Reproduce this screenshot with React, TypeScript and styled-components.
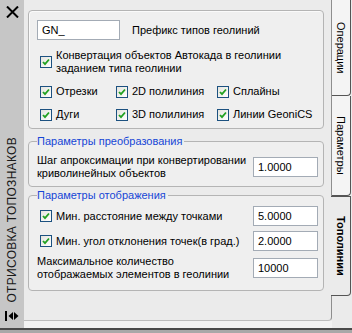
import styled, { createGlobalStyle } from "styled-components";

const GlobalStyle = createGlobalStyle`
  html, body {
    margin: 0;
    padding: 0;
    background: #ebebeb;
  }
  body {
    font-family: "Liberation Sans", Arial, sans-serif;
    font-size: 11px;
    color: #000;
  }
`;

// общий каркас палитры
const Frame = styled.div`
  width: 352px;
  height: 333px;
  display: flex;
  flex-direction: column;
  background: #ebebeb;
  overflow: hidden;
`;

const Main = styled.div`
  flex: 1;
  display: flex;
  min-height: 0;
`;

const BottomEdge = styled.div`
  height: 5px;
  box-sizing: border-box;
  border-top: 2px solid #4a4a4a;
  background: #a8a8a8;
`;

// левая полоса с заголовком
const Strip = styled.div`
  width: 24px;
  flex: none;
  background: #c6c6c6;
  display: flex;
  flex-direction: column;
  align-items: center;
  padding: 6px 0 6px;
  box-sizing: border-box;
`;

const StripTitle = styled.div`
  margin-top: auto;
  writing-mode: vertical-rl;
  transform: rotate(180deg);
  font-size: 12px;
  letter-spacing: 0.3px;
  color: #1a1a1a;
  white-space: nowrap;
`;

const DockIcon = styled.div`
  margin-top: 7px;
  height: 12px;
  display: flex;
  align-items: center;
`;

// центральная область
const PaneColumn = styled.div`
  flex: 1;
  display: flex;
  flex-direction: column;
  min-width: 0;
`;

const Pane = styled.div`
  flex: 1;
  display: flex;
  flex-direction: column;
  padding: 10px 7px 0 4px;
  border-right: 1px solid #8e8e8e;
  border-bottom: 1px solid #bdbdbd;
  border-bottom-right-radius: 4px;
`;

const PaneBand = styled.div`
  height: 7px;
  background: #f3f3f3;
`;

const Box = styled.div`
  border: 1px solid #b4b4b4;
  border-radius: 4px;
  background: #efefef;
  box-shadow: inset 1px 1px 0 #fafafa;
  padding: 9px 8px 6px 8px;
`;

const Group = styled.fieldset<{ $top: number; $bottom: number }>`
  margin: ${(p) => p.$top}px 0 0 0;
  border: 1px solid #b4b4b4;
  border-radius: 4px;
  background: #efefef;
  padding: 2px 5px ${(p) => p.$bottom}px 8px;
  min-width: 0;
`;

const GroupTitle = styled.legend`
  color: #1646d6;
  padding: 0 2px 0 0;
  line-height: 13px;
  font-size: 11px;
`;

const Row = styled.div<{ $top?: number }>`
  display: flex;
  align-items: center;
  margin-top: ${(p) => p.$top ?? 0}px;
`;

const Label = styled.span`
  flex: 1;
  line-height: 13px;
  white-space: nowrap;
`;

const Caption = styled.span`
  margin-left: 12px;
  white-space: nowrap;
`;

const CheckGrid = styled.div`
  display: grid;
  grid-template-columns: 76px 101px auto;
  grid-auto-rows: 15px;
  row-gap: 8px;
  margin-top: 9px;
`;

const CheckItem = styled.label`
  display: flex;
  align-items: center;
  white-space: nowrap;
  line-height: 13px;
`;

const CheckBox = styled.span`
  width: 12px;
  height: 12px;
  box-sizing: border-box;
  flex: none;
  margin: 0 4px 0 3px;
  border: 1px solid #1c5180;
  background: linear-gradient(135deg, #e4e4de, #ffffff);
  display: flex;
  align-items: center;
  justify-content: center;
`;

const Field = styled.input<{ $w: number }>`
  width: ${(p) => p.$w}px;
  height: 20px;
  box-sizing: border-box;
  flex: none;
  border: 1px solid #a3abb5;
  background: #fff;
  padding: 0 4px;
  font-family: inherit;
  font-size: 11px;
  color: #000;
  outline: none;
`;

// вкладки справа
const Tabs = styled.div`
  width: 20px;
  flex: none;
  display: flex;
  flex-direction: column;
`;

const Tab = styled.div<{ $h: number; $active?: boolean }>`
  height: ${(p) => p.$h}px;
  box-sizing: border-box;
  flex: none;
  margin-left: ${(p) => (p.$active ? -1 : 0)}px;
  width: ${(p) => (p.$active ? 20 : 19)}px;
  background: ${(p) => (p.$active ? "#ebebeb" : "#f4f4f4")};
  border-right: 1px solid #555;
  border-bottom: 1px solid #555;
  border-top: ${(p) => (p.$active ? "1px solid #555" : "none")};
  border-bottom-right-radius: 4px;
  display: flex;
  align-items: center;
  justify-content: center;
`;

const TabText = styled.span<{ $active?: boolean }>`
  writing-mode: vertical-rl;
  font-size: 11px;
  font-weight: ${(p) => (p.$active ? 700 : 400)};
  white-space: nowrap;
`;

const Check = () => (
  <CheckBox>
    <svg width="8" height="8" viewBox="0 0 8 8">
      <path d="M1 4 L3 6.2 L7 1.5" fill="none" stroke="#21a121" strokeWidth="1.8" />
    </svg>
  </CheckBox>
);

const App = () => {
  return (
    <Frame>
      <GlobalStyle />
      <Main>
        <Strip>
          <svg width="13" height="12" viewBox="0 0 13 12">
            <path d="M1 0.5 L12 11.5 M12 0.5 L1 11.5" stroke="#000" strokeWidth="2" />
          </svg>
          <StripTitle>ОТРИСОВКА ТОПОЗНАКОВ</StripTitle>
          <DockIcon>
            <svg width="14" height="10" viewBox="0 0 14 10">
              <rect x="0" y="0" width="2" height="10" fill="#000" />
              <polygon points="8,1 3.5,5 8,9" fill="#000" />
              <polygon points="9,1 13.5,5 9,9" fill="#000" />
            </svg>
          </DockIcon>
        </Strip>

        <PaneColumn>
          <Pane>
            <Box>
              <Row>
                <Field $w={83} defaultValue="GN_" />
                <Caption>Префикс типов геолиний</Caption>
              </Row>
              <Row $top={9}>
                <Check />
                <Label>
                  Конвертация объектов Автокада в геолинии
                  <br />
                  заданием типа геолинии
                </Label>
              </Row>
              <CheckGrid>
                <CheckItem><Check />Отрезки</CheckItem>
                <CheckItem><Check />2D полилиния</CheckItem>
                <CheckItem><Check />Сплайны</CheckItem>
                <CheckItem><Check />Дуги</CheckItem>
                <CheckItem><Check />3D полилиния</CheckItem>
                <CheckItem><Check />Линии GeoniCS</CheckItem>
              </CheckGrid>
            </Box>

            <Group $top={6} $bottom={6}>
              <GroupTitle>Параметры преобразования</GroupTitle>
              <Row $top={4}>
                <Label>
                  Шаг апроксимации при конвертировании
                  <br />
                  криволинейных объектов
                </Label>
                <Field $w={65} defaultValue="1.0000" />
              </Row>
            </Group>

            <Group $top={2} $bottom={9}>
              <GroupTitle>Параметры отображения</GroupTitle>
              <Row $top={2}>
                <Check />
                <Label>Мин. расстояние между точками</Label>
                <Field $w={65} defaultValue="5.0000" />
              </Row>
              <Row $top={5}>
                <Check />
                <Label>Мин. угол отклонения точек(в град.)</Label>
                <Field $w={65} defaultValue="2.0000" />
              </Row>
              <Row $top={4}>
                <Label>
                  Максимальное количество
                  <br />
                  отображаемых элементов в геолинии
                </Label>
                <Field $w={65} defaultValue="10000" />
              </Row>
            </Group>
          </Pane>
          <PaneBand />
        </PaneColumn>

        <Tabs>
          <Tab $h={96}>
            <TabText>Операции</TabText>
          </Tab>
          <Tab $h={100}>
            <TabText>Параметры</TabText>
          </Tab>
          <Tab $h={100} $active>
            <TabText $active>Тополинии</TabText>
          </Tab>
        </Tabs>
      </Main>
      <BottomEdge />
    </Frame>
  );
};

export default App;
